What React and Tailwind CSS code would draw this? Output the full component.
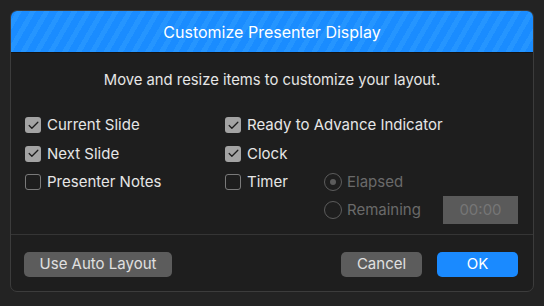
import { Check } from 'lucide-react'

function CheckBox({ checked, label }) {
  return (
    <div className="flex items-center h-[28.5px]">
      {checked ? (
        <div className="w-[16px] h-[16px] rounded-[3px] bg-[#a3a3a3] flex items-center justify-center">
          <Check size={13} strokeWidth={2.4} className="text-[#1c1c1c]" />
        </div>
      ) : (
        <div className="w-[16px] h-[16px] rounded-[3px] border border-[#7a7a7a]" />
      )}
      <span className="ml-[6px] text-[15px] text-[#e6e6e6]">{label}</span>
    </div>
  )
}

function Radio({ selected, label }) {
  return (
    <div className="flex items-center h-[28px]">
      <div className="w-[18px] h-[18px] rounded-full border border-[#5c5c5c] flex items-center justify-center">
        {selected && <div className="w-[6px] h-[6px] rounded-full bg-[#5c5c5c]" />}
      </div>
      <span className="ml-[5px] text-[15px] text-[#6a6a6a]">{label}</span>
    </div>
  )
}

export default function App() {
  return (
    <div
      className="w-[544px] h-[306px] bg-[#232323] pt-[10px] pl-[10px] pr-[10px] pb-[14px]"
      style={{ fontFamily: 'Inter, "Liberation Sans", Arial, sans-serif' }}
    >
      <div className="h-full rounded-[7px] border border-[#3c3c3c] bg-[#1e1e1e] flex flex-col overflow-hidden">
        {/* Header */}
        <div className="h-[42px] shrink-0 flex items-center justify-center border-b border-[#141414] bg-[repeating-linear-gradient(-60deg,#1a8cff_0px,#1a8cff_7px,#2595ff_7px,#2595ff_12px)]">
          <span className="text-[16px] text-white">Customize Presenter Display</span>
        </div>

        {/* Body */}
        <div className="flex-1 flex flex-col">
          <div className="text-center text-[14.8px] text-[#e6e6e6] mt-[16px]">
            Move and resize items to customize your layout.
          </div>

          <div className="flex mt-[20px] pl-[14px]">
            <div className="w-[200px] flex flex-col">
              <CheckBox checked label="Current Slide" />
              <CheckBox checked label="Next Slide" />
              <CheckBox label="Presenter Notes" />
            </div>
            <div className="flex flex-col">
              <CheckBox checked label="Ready to Advance Indicator" />
              <CheckBox checked label="Clock" />
              <div className="flex items-start">
                <div className="w-[99px]">
                  <CheckBox label="Timer" />
                </div>
                <div className="flex flex-col">
                  <Radio selected label="Elapsed" />
                  <div className="flex items-center">
                    <div className="w-[119px]">
                      <Radio label="Remaining" />
                    </div>
                    <div className="w-[75px] h-[28px] bg-[#5a5a5a] flex items-center justify-center text-[15px] text-[#767676]">
                      00:00
                    </div>
                  </div>
                </div>
              </div>
            </div>
          </div>

          <div className="mt-auto border-t border-[#353535] h-[57px] shrink-0 flex items-start pt-[17px] pl-[13px] pr-[15px]">
            <button className="h-[25px] w-[148px] rounded-[5px] bg-[#5c5c5c] text-[15px] text-[#e0e0e0]">
              Use Auto Layout
            </button>
            <button className="ml-auto h-[25px] w-[81px] rounded-[5px] bg-[#5c5c5c] text-[15px] text-[#e0e0e0]">
              Cancel
            </button>
            <button className="ml-[15px] h-[25px] w-[81px] rounded-[5px] bg-[#1a8aff] text-[15px] text-white">
              OK
            </button>
          </div>
        </div>
      </div>
    </div>
  )
}
